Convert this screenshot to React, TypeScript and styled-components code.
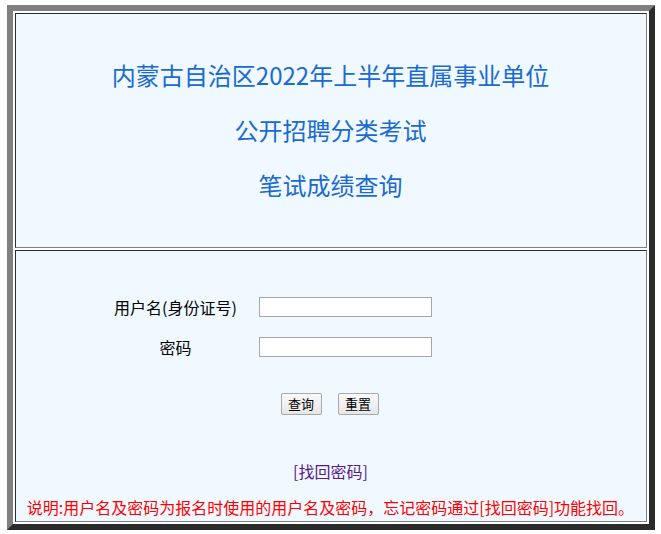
import styled, { createGlobalStyle } from 'styled-components';

const GlobalStyle = createGlobalStyle`
	body {
		margin: 5px 0 0;
		background: #ffffff;
		font-family: "Noto Sans CJK SC", "Noto Sans", sans-serif;
	}
`;

const Frame = styled.div`
	width: 648px;
	margin: 0 auto;
	box-sizing: border-box;
	padding: 2px;
	display: flex;
	flex-direction: column;
	gap: 2px;
	background: #ffffff;
	border: 6px solid;
	border-color: #808080 #2b2b2b #2b2b2b #808080;
`;

const Cell = styled.div<{ $height: number }>`
	height: ${(p) => p.$height}px;
	box-sizing: border-box;
	background: #f0f9ff;
	border: 1px solid;
	border-color: #2b2b2b #808080 #808080 #2b2b2b;
	display: flex;
	flex-direction: column;
	align-items: center;
`;

const Header = styled(Cell)`
	justify-content: center;
	padding-bottom: 3px;
`;

const TitleLine = styled.div`
	font-size: 24px;
	line-height: 55px;
	color: #1a6ad2;
`;

const FormGrid = styled.div`
	margin-top: 36px;
	margin-left: -124px;
	display: grid;
	grid-template-columns: 140px 173px;
	grid-auto-rows: 40px;
	column-gap: 13px;
	align-items: center;
`;

const Label = styled.label`
	text-align: center;
	font-size: 16px;
	color: #000;
`;

const Input = styled.input`
	width: 173px;
	height: 20px;
	box-sizing: border-box;
	border: 1px solid #a6a6a6;
	background: #fff;
	margin: 0;
	padding: 0 2px;
`;

const Buttons = styled.div`
	margin-top: 21px;
	margin-left: -2px;
	height: 32px;
	display: flex;
	align-items: center;
	gap: 16px;
`;

const Button = styled.button`
	width: 41px;
	height: 22px;
	padding: 0;
	font-family: "Noto Sans CJK SC", sans-serif;
	font-size: 13px;
	line-height: 20px;
	color: #000;
	border: 1px solid #a8a8a8;
	border-radius: 2px;
	background: linear-gradient(#fafafa, #e6e6e6);
`;

const Link = styled.a`
	margin-top: 39px;
	font-size: 16px;
	line-height: 24px;
	color: #551a8b;
	text-decoration: none;
`;

const Note = styled.div`
	margin-top: 13px;
	font-size: 16px;
	line-height: 22px;
	color: #ff0000;
`;

const App = () => {
	return <>
		<GlobalStyle />
		<Frame>
			<Header $height={235}>
				<TitleLine>内蒙古自治区2022年上半年直属事业单位</TitleLine>
				<TitleLine>公开招聘分类考试</TitleLine>
				<TitleLine>笔试成绩查询</TitleLine>
			</Header>
			<Cell $height={272}>
				<FormGrid>
					<Label>用户名(身份证号)</Label>
					<Input type="text" />
					<Label>密码</Label>
					<Input type="password" />
				</FormGrid>
				<Buttons>
					<Button>查询</Button>
					<Button>重置</Button>
				</Buttons>
				<Link href="#">[找回密码]</Link>
				<Note>说明:用户名及密码为报名时使用的用户名及密码，忘记密码通过[找回密码]功能找回。</Note>
			</Cell>
		</Frame>
	</>;
};

export default App;
